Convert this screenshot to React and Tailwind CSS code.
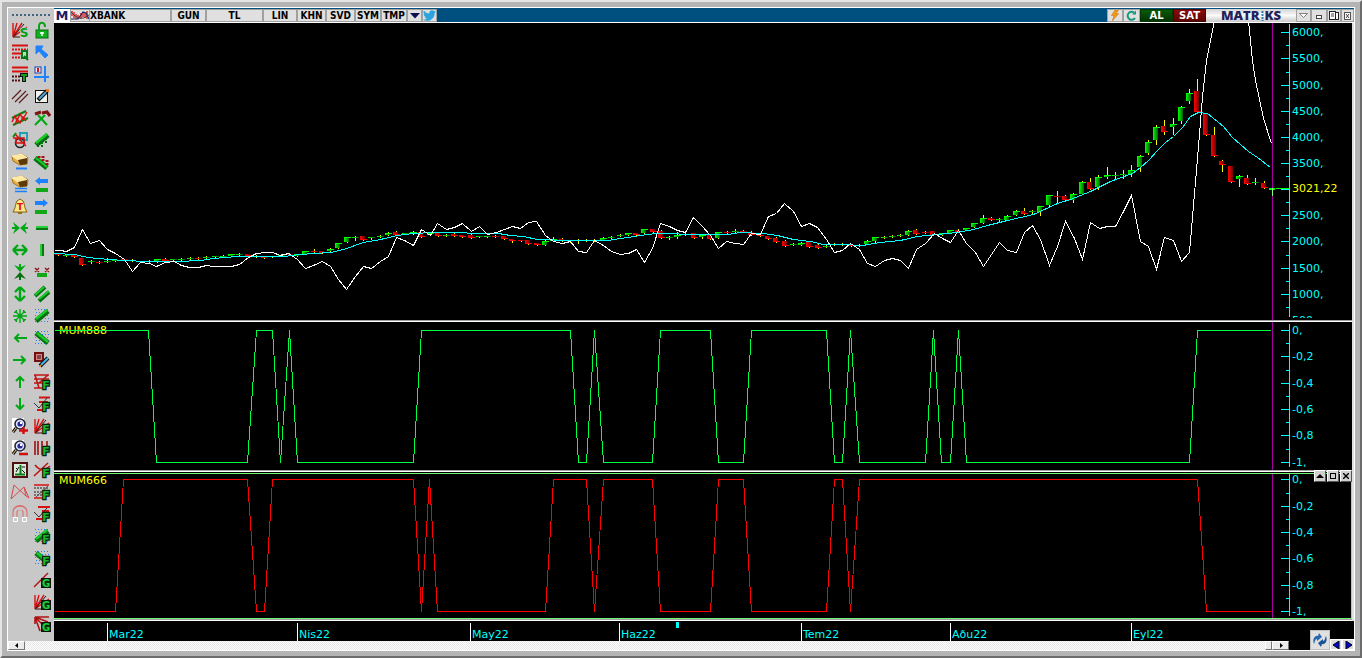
import clsx from "clsx";

const CHART_LEFT = 54;
const PLOT_WIDTH = 1219;

// [x, bodyTop, bodyBottom, high, low, up]
const CANDLES = [
  [58, 254, 255, 254, 255, 0], [66, 255, 256, 255, 256, 1], [74, 255, 257, 255, 257, 0], [82, 258, 265, 258, 265, 0],
  [91, 261, 262, 260, 263, 1], [99, 262, 263, 261, 263, 0], [107, 261, 262, 258, 262, 1], [115, 260, 261, 260, 261, 1],
  [124, 259, 260, 259, 260, 0], [132, 260, 261, 259, 261, 1], [140, 261, 262, 261, 262, 0], [149, 261, 262, 260, 262, 1],
  [157, 259, 262, 259, 262, 1], [165, 259, 261, 258, 261, 0], [173, 259, 260, 259, 260, 1], [181, 259, 260, 258, 260, 1],
  [190, 258, 259, 257, 259, 1], [198, 258, 259, 257, 259, 0], [206, 257, 258, 256, 258, 1], [215, 256, 257, 256, 257, 1],
  [223, 256, 257, 255, 257, 1], [231, 254, 256, 254, 256, 1], [239, 254, 255, 253, 255, 1], [248, 254, 256, 254, 256, 0],
  [256, 256, 257, 255, 257, 1], [264, 257, 258, 257, 258, 0], [272, 256, 257, 256, 257, 1], [281, 255, 256, 254, 256, 1],
  [289, 254, 255, 253, 255, 0], [297, 254, 256, 254, 256, 1], [305, 251, 254, 251, 254, 1], [314, 251, 252, 249, 252, 0],
  [322, 251, 253, 251, 253, 0], [330, 249, 251, 248, 251, 1], [338, 243, 248, 243, 248, 1], [347, 237, 242, 237, 242, 1],
  [355, 237, 238, 236, 240, 1], [363, 236, 240, 236, 240, 0], [371, 237, 238, 237, 239, 1], [380, 236, 237, 235, 237, 1],
  [388, 233, 235, 232, 235, 1], [396, 232, 235, 231, 235, 0], [405, 233, 234, 233, 234, 1], [413, 232, 234, 231, 234, 1],
  [421, 232, 237, 232, 237, 0], [430, 233, 235, 233, 235, 1], [438, 233, 236, 233, 236, 0], [446, 235, 236, 234, 236, 1],
  [454, 234, 236, 233, 236, 0], [462, 235, 237, 235, 237, 0], [471, 235, 238, 234, 238, 0], [479, 236, 237, 236, 237, 1],
  [487, 236, 237, 236, 237, 1], [495, 236, 237, 235, 237, 0], [504, 236, 239, 236, 239, 0], [512, 239, 241, 239, 242, 0],
  [521, 240, 241, 240, 241, 0], [528, 240, 244, 240, 244, 0], [537, 243, 245, 243, 245, 0], [545, 241, 245, 240, 245, 1],
  [553, 239, 241, 237, 241, 1], [562, 239, 241, 238, 241, 0], [570, 241, 242, 241, 242, 0], [578, 240, 241, 239, 243, 1],
  [586, 240, 241, 239, 241, 1], [594, 240, 241, 239, 241, 1], [603, 238, 240, 237, 240, 1], [611, 237, 238, 236, 238, 1],
  [620, 235, 236, 234, 236, 1], [628, 233, 235, 233, 235, 1], [636, 233, 235, 233, 235, 0], [644, 229, 233, 229, 233, 1],
  [653, 229, 232, 229, 232, 0], [661, 231, 238, 230, 238, 0], [669, 237, 238, 236, 239, 1], [677, 235, 237, 232, 238, 1],
  [685, 234, 235, 231, 235, 1], [694, 233, 238, 233, 238, 0], [702, 235, 237, 234, 238, 1], [710, 235, 239, 235, 239, 0],
  [718, 232, 238, 232, 238, 1], [727, 232, 233, 231, 234, 0], [735, 231, 232, 229, 232, 1], [743, 231, 232, 230, 232, 0],
  [751, 232, 235, 231, 235, 0], [760, 234, 236, 234, 236, 0], [768, 236, 239, 236, 239, 0], [776, 238, 242, 237, 242, 0],
  [785, 241, 246, 240, 246, 0], [793, 244, 245, 243, 245, 1], [801, 243, 245, 242, 245, 1], [809, 242, 247, 242, 247, 0],
  [818, 245, 248, 244, 248, 0], [826, 246, 247, 245, 247, 1], [834, 244, 245, 243, 245, 1], [842, 244, 245, 243, 245, 1],
  [851, 244, 246, 244, 246, 0], [859, 245, 246, 244, 246, 1], [867, 241, 244, 240, 244, 1], [875, 237, 241, 237, 242, 1],
  [884, 237, 238, 236, 238, 1], [892, 236, 237, 235, 237, 1], [900, 235, 236, 234, 236, 1], [908, 231, 235, 230, 235, 1],
  [916, 230, 234, 229, 234, 0], [925, 232, 233, 231, 233, 0], [933, 231, 235, 231, 235, 0], [942, 233, 235, 233, 235, 1],
  [950, 230, 233, 230, 233, 1], [958, 230, 232, 229, 232, 0], [966, 228, 230, 228, 230, 1], [974, 223, 227, 223, 227, 1],
  [983, 218, 223, 215, 223, 1], [991, 218, 220, 217, 220, 0], [999, 219, 220, 218, 221, 1], [1007, 216, 220, 215, 220, 1],
  [1016, 211, 215, 210, 215, 1], [1024, 211, 214, 208, 214, 0], [1032, 211, 212, 210, 213, 1], [1040, 206, 212, 206, 215, 1],
  [1049, 195, 205, 195, 206, 1], [1057, 196, 197, 191, 202, 0], [1065, 196, 200, 195, 200, 0], [1073, 194, 200, 193, 202, 1],
  [1082, 182, 194, 181, 194, 1], [1090, 182, 189, 178, 189, 0], [1098, 177, 187, 175, 189, 1], [1107, 175, 177, 167, 178, 1],
  [1115, 175, 176, 172, 179, 1], [1123, 174, 175, 170, 178, 1], [1131, 170, 174, 165, 176, 1], [1140, 156, 167, 155, 171, 1],
  [1148, 142, 153, 140, 154, 1], [1156, 127, 140, 125, 144, 1], [1164, 126, 132, 120, 134, 0], [1173, 124, 127, 118, 134, 1],
  [1181, 107, 121, 106, 123, 1], [1189, 93, 101, 89, 103, 1], [1197, 91, 112, 79, 112, 0], [1206, 114, 135, 114, 135, 0],
  [1214, 135, 156, 127, 156, 0], [1222, 161, 165, 160, 171, 0], [1231, 166, 182, 166, 182, 0], [1239, 176, 179, 175, 186, 1],
  [1247, 178, 184, 175, 184, 0], [1255, 182, 183, 178, 184, 1], [1264, 183, 188, 181, 188, 0],
];

const WHITE_LINE =
  "54,250 60,250 66,251 74,247 82,229 90,243 99,240 107,249 115,253 124,259 132,271 140,262 149,263 156,266 165,262 174,261 181,265 189,267 198,267 206,265 213,266 231,266 239,264 248,257 256,253 265,252 272,252 280,255 288,253 297,259 305,268 313,265 322,261 330,266 338,279 346,289 355,276 363,266 371,268 380,261 388,256 396,237 404,240 413,245 421,229 430,235 437,223 446,229 454,227 462,223 471,231 479,226 487,234 496,232 504,229 512,226 520,228 528,222 536,221 545,235 553,241 562,243 570,241 578,251 586,252 594,240 603,245 611,251 620,254 628,253 636,249 644,262 652,248 660,223 669,226 677,230 685,232 693,217 702,226 710,235 718,248 726,241 735,243 743,244 751,233 760,234 768,216 776,213 784,203 793,211 801,226 809,223 817,227 826,239 834,252 842,250 850,243 859,249 867,263 875,266 884,260 892,258 900,260 908,268 916,249 925,243 934,233 942,238 950,242 958,230 966,243 975,252 983,266 999,242 1007,250 1016,252 1024,232 1032,225 1040,239 1049,265 1057,246 1065,221 1074,238 1082,259 1090,222 1099,228 1107,226 1115,226 1123,211 1131,195 1140,241 1148,246 1156,269 1164,237 1173,240 1181,261 1189,252 1198,146 1202,96 1206,60 1214,20";

const WHITE_LINE_END = "1248,20 1252,60 1255,80 1263,118 1271,143";

const AVERAGE_LINE =
  "54,253 75,254 82,256 96,258 110,259 123,260 147,261 177,261 200,260 213,258 237,256 283,256 300,254 313,253 330,252 343,249 363,242 380,239 397,235 413,233 433,232 462,232 470,233 498,233 510,235 523,236 537,239 570,240 607,240 627,237 647,234 657,233 700,234 727,234 740,232 763,233 777,235 793,239 810,241 823,244 843,244 862,245 880,242 900,240 917,236 937,234 957,232 973,229 987,225 1007,220 1033,214 1057,203 1070,199 1090,191 1110,181 1132,173 1140,167 1148,160 1157,150 1165,142 1173,136 1182,127 1190,116 1198,112 1207,113 1223,126 1232,137 1240,144 1248,151 1257,157 1270,167";

const MUM888_LINE =
  "54,330 148,330 156,462 247,462 256,330 272,330 280,462 289,330 297,462 413,462 421,330 570,330 578,462 586,462 594,330 603,462 652,462 660,330 710,330 718,462 743,462 751,330 826,330 834,462 842,462 850,330 859,462 925,462 933,330 941,462 950,462 958,330 966,462 1189,462 1197,330 1270,330";

const MUM666_LINE =
  "54,611 115,611 123,479 247,479 256,611 264,611 272,479 413,479 421,611 429,479 437,611 545,611 553,479 586,479 594,611 603,479 652,479 660,611 710,611 718,479 743,479 751,611 826,611 834,479 842,479 850,611 859,479 1197,479 1206,611 1270,611";

const PRICE_TICKS = [
  [32, "6000,"], [58, "5500,"], [85, "5000,"], [111, "4500,"], [137, "4000,"], [163, "3500,"], [189, ""],
  [215, "2500,"], [241, "2000,"], [268, "1500,"], [294, "1000,"], [320, "500,"],
];

const MUM888_TICKS = [[330, "0,"], [356, "-0,2"], [383, "-0,4"], [409, "-0,6"], [435, "-0,8"], [462, "-1,"]];
const MUM666_TICKS = [[479, "0,"], [506, "-0,2"], [532, "-0,4"], [558, "-0,6"], [585, "-0,8"], [611, "-1,"]];

const MONTHS = [
  { x: 107, label: "Mar22" },
  { x: 297, label: "Nis22" },
  { x: 470, label: "May22" },
  { x: 619, label: "Haz22" },
  { x: 801, label: "Tem22" },
  { x: 950, label: "Aðu22" },
  { x: 1131, label: "Eyl22" },
];
const TIMELINE_END = 1289;

const RED = "#d81010";
const GREEN = "#00a814";
const BLUE = "#1e82ff";

const P = ({ d, c = GREEN, w = 1, f = "none", ...rest }) => (
  <path d={d} stroke={c} strokeWidth={w} fill={f} {...rest} />
);

const LetterF = () => (
  <text x="12" y="15" textAnchor="middle" fill="#18b828" stroke="#0a200a" strokeWidth="2.500" paintOrder="stroke" className="text-[11px] font-bold">
    F
  </text>
);

const LetterG = () => (
  <>
    <rect x="7.500" y="6.500" width="9" height="9" fill="#0c2c0c" stroke="#111" />
    <text x="12" y="15" textAnchor="middle" fill="#20d038" className="text-[10px] font-bold">G</text>
  </>
);

const fan = (
  <>
    <P d="M1 1V15L5 1M1 15L10 1M1 15L15 5" c={RED} w={1.4} />
    <P d="M1 15H8M2 14L12 2" c="#301010" />
  </>
);

const ingot = (
  <>
    <P d="M0 2L10 0L16 4L15 10L8 11L1 7Z" c="#a87410" f="#e9b04a" />
    <P d="M0 2L10 0L15 4L6 6Z" c="#fff0bd" f="#ffe8a0" />
    <P d="M6 6L8 11L15 10L15 4Z" c="none" f="#5c3a08" />
  </>
);

const magnifier = (
  <>
    <rect x="0" y="0" width="12" height="12" fill="#fff" />
    <circle cx="8" cy="6" r="5" fill="#dce8ff" stroke="#223" strokeWidth="1.6" />
    <circle cx="8" cy="6" r="2.6" fill="#28289c" />
    <rect x="8" y="4" width="2" height="2" fill="#fff" />
    <P d="M4 10L1 14" c="#111" w={3} />
    <P d="M4 10L1 14" c="#f0c060" />
  </>
);

const blueDots = <P d="M1 1.500H15M2 4.500H15M1 7.500H15M2 10.500H15M1 13.500H15" c={BLUE} strokeDasharray="1 2" />;
const barUp = (
  <>
    <P d="M2 13L14 3" c="#067010" w={5} />
    <P d="M2 11L13 2" c="#18cc28" w={2.5} />
  </>
);
const barDown = (
  <>
    <P d="M2 3L14 13" c="#067010" w={5} />
    <P d="M3 3L14 12" c="#18cc28" w={2.5} />
  </>
);

const LEFT_TOOLS = [
  ["Hız yelpazesi", <>{fan}<text x="12" y="15" textAnchor="middle" fill="#00a010" stroke="#c8c8c8" strokeWidth="1.500" paintOrder="stroke" className="text-[12px] font-bold">S</text></>],
  ["Çeyrek seviyeler", <><P d="M0 1.5H16M0 9.5H9" c={RED} w={2} /><P d="M0 5.5H16M0 13.5H9" c={RED} w={2} strokeDasharray="2 1" /><rect x="10" y="7" width="5" height="7" fill="#b4e8b4" stroke="#087818" strokeWidth="2" /><P d="M12 12L16 16" c="#087818" w={2} /></>],
  ["Üçte bir seviyeler", <><P d="M0 1.5H16M0 5.5H16" c={RED} w={2} /><P d="M0 10.5H8M0 14.5H8" c="#501010" w={2} strokeDasharray="2 1" /><P d="M8 9H16M12 9V16" c="#111" w={4} /><P d="M9 9H15M12 9V15" c="#10a020" w={2} /></>],
  ["Paralel çizgiler", <P d="M0 11L9 2M3 14L14 3M7 15L16 6" c="#5a2020" w={1.2} />],
  ["Kanal", <><P d="M0 8L14 1M1 15L16 8" c="#0a8010" w={2} /><P d="M0 12L3 6L5 11L8 4L11 9L15 2M3 15L5 9L8 13L11 7L14 11" c={RED} w={1.4} /></>],
  ["Şekiller", <><rect x="8" y="1" width="7" height="7" fill="none" stroke="#20a0b0" strokeWidth="2" /><circle cx="8" cy="11" r="4.5" fill="none" stroke="#222" strokeWidth="1.6" /><P d="M1 6H12V11H4V6M3 2L6 5L9 9L14 14" c={RED} w={1.6} /><P d="M1 5L4 1" c="#0a9010" w={2} /></>],
  ["Altın TL", <>{ingot}<P d="M4 14.5H15" c={BLUE} w={2} /></>],
  ["Altın USD", <>{ingot}<P d="M3 12.5H15M3 15.5H15" c={BLUE} w={1.6} /></>],
  ["Alarm", <><P d="M2 12C4 9 3 6 5 3L8 1L11 3C13 6 12 9 14 12L15 14H1Z" c="#806010" f="#ffe88a" /><text x="8" y="12" textAnchor="middle" fill="#e01010" className="text-[9px] font-bold">T</text><rect x="6" y="14" width="4" height="2" fill="#907020" /></>],
  ["Yatay daralt", <><path d="M1 2L8 8L1 14L3 9H0V7H3ZM15 2L8 8L15 14L13 9H16V7H13Z" fill={GREEN} /></>],
  ["Yatay genişlet", <P d="M1 8L6 3M1 8L6 13M15 8L10 3M15 8L10 13M1 8H15" w={2.4} />],
  ["Dikey daralt", <><path d="M2 1L8 8L14 1L9 3V0H7V3Z" fill={GREEN} /><path d="M2 15L8 8L14 15L9 13V16H7V13Z" fill="#087010" /></>],
  ["Dikey genişlet", <P d="M8 1L3 6M8 1L13 6M8 15L3 10M8 15L13 10M8 1V15" w={2.4} />],
  ["Sığdır", <><P d="M8 1V15M1 8H15M3 3L13 13M13 3L3 13" w={1.4} /><P d="M4.500 2V4.500H2M11.500 2V4.500H14M4.500 14V11.500H2M11.500 14V11.500H14" w={1.2} /><circle cx="8" cy="8" r="2" fill={GREEN} /></>],
  ["Sola kaydır", <P d="M15 8H3M7 4L3 8L7 12" w={2} />],
  ["Sağa kaydır", <P d="M1 8H13M9 4L13 8L9 12" w={2} />],
  ["Yukarı kaydır", <P d="M8 14V3M4 7L8 3L12 7" w={2} />],
  ["Aşağı kaydır", <P d="M8 2V13M4 9L8 13L12 9" w={2} />],
  ["Yakınlaştır", <>{magnifier}<P d="M7 12.5H16M11.5 9V16" c="#d01010" w={2.5} /></>],
  ["Uzaklaştır", <>{magnifier}<P d="M7 14H16" c="#d01010" w={2.5} /></>],
  ["Eksenler", <><rect x="1" y="1" width="14" height="14" fill="#d8ecd8" stroke="#501010" strokeWidth="2" /><P d="M8.5 3V12M3 12.5H13" c="#087818" w={2} /><P d="M4 6L6 8M7 5L4 10M10 8L13 11M10 5H13" c="#111" /></>],
  ["Kelebek formasyonu", <P d="M-1 15L2 1L14 12L12 3ZM12 3L17 14L14 12" c="#d84848" />],
  ["Mıknatıs", <><P d="M3 11V6C3 0 13 0 13 6V11" c="#dd6868" w={5} /><P d="M3 11V6C3 1 13 1 13 6V11" c="#c8c8c8" w={3} /><P d="M1.5 11.5H5.5V15.5H1.5ZM10.5 11.5H14.5V15.5H10.5Z" c="#fff" f="#ccc" /></>],
];

const RIGHT_TOOLS = [
  ["Kilit", <><rect x="2" y="8" width="12" height="8" fill="#10b020" stroke="#067010" /><P d="M5 8V4C5 -0.500 11 -0.500 11 5" w={2} c="#0ba018" /><P d="M8 10V14M6 11H10" c="#fff" w={1.4} /></>],
  ["Ok", <P d="M2 2H9L7 5L14 11L11 14L5 7L2 10Z" c={BLUE} f={BLUE} />],
  ["Artı imleç", <><P d="M0 11H15M11 0V16" c={BLUE} w={2} /><rect x="1" y="1" width="6" height="6" fill="#f4e8ff" stroke="#1844a0" /><P d="M4 2V6" c={RED} w={2} /></>],
  ["Not düzenle", <><rect x="1.5" y="2.5" width="12" height="12" fill="#f2f2ea" stroke="#111" /><P d="M4 12L13 3" c="#111" w={4} /><P d="M5 11L12 4" c="#46a4dd" w={2} /><rect x="12" y="1" width="3" height="3" fill="#e87828" /></>],
  ["Ayarlar", <><P d="M1 15L11 5M4 5L13 15" w={2} /><P d="M1 4L7 2M8 3L13 2L16 6" c="#7c1414" w={3} /></>],
  ["Yükselen trend", <>{barUp}<P d="M4 15V12M8 15V9M12 11V6" c="#067010" w={2} strokeDasharray="2 1" /></>],
  ["Düşen trend", <><P d="M1 4L13 14" c="#067010" w={5} /><P d="M2 4L13 13" c="#18cc28" w={2} /><P d="M5 4V1M9 7V2M13 11V6" c="#a01414" w={3} strokeDasharray="2 1" /></>],
  ["Sol ışın", <><path d="M1 5L6 1V3H14V7H6V9Z" fill={BLUE} /><rect x="2" y="12" width="12" height="4" fill="#10a818" /></>],
  ["Sağ ışın", <><path d="M14 5L9 1V3H1V7H9V9Z" fill={BLUE} /><rect x="1" y="12" width="12" height="4" fill="#10a818" /></>],
  ["Yatay çizgi", <><rect x="2" y="6" width="12" height="4" fill="#087810" /><rect x="2" y="6" width="12" height="2" fill="#28d038" /></>],
  ["Dikey çizgi", <><rect x="6" y="2" width="4" height="12" fill="#087810" /><rect x="6" y="2" width="2" height="12" fill="#28d038" /></>],
  ["Doğru parçası", <><rect x="3" y="9" width="10" height="4" fill="#10a818" /><P d="M1 4L5 8M5 4L1 8M11 4L15 8M15 4L11 8" c="#901414" w={1.4} /></>],
  ["Paralel kanal", <><P d="M1 10L11 1M5 15L15 6" c="#067010" w={4} /><P d="M1 9L10 1M5 13L15 5" c="#18cc28" w={2} /></>],
  ["Yukarı bant", <>{blueDots}{barUp}</>],
  ["Aşağı bant", <>{blueDots}{barDown}</>],
  ["Silgi", <><rect x="1" y="1" width="8" height="8" fill="#e08080" stroke="#701010" strokeWidth="2" /><P d="M3 4H7M3 6H7" c="#111" /><P d="M6 14L14 6" c="#111" w={4} /><P d="M7 13L14 6" c="#48b4e8" w={2} /><rect x="5" y="13" width="2" height="2" fill="#e88828" /></>],
  ["Fibonacci dikdörtgen", <><P d="M0 1H15M0 5H15M0 9H9M0 14H9M1 1L5 14M5 9L14 1" c="#c01414" w={1.6} /><LetterF /></>],
  ["Fibonacci geri çekilme", <><P d="M5 1.5H16M5 6H14M3 14H9" c={RED} w={2} /><P d="M0 7L5 12L13 2" c="#333" /><LetterF /></>],
  ["Fibonacci yelpaze", <>{fan}<LetterF /></>],
  ["Fibonacci zaman", <><P d="M1 1V15M4 1V15M8 1V15M13 1V6" c="#a01010" w={1.6} /><LetterF /></>],
  ["Fibonacci yay", <><P d="M0 14L14 1M1 3C6 9 10 9 16 4" c="#c01414" w={1.6} /><LetterF /></>],
  ["Fibonacci kanal", <><P d="M0 1H15M0 14H8" c={RED} w={1.6} /><P d="M0 4H15M0 8H8M0 11H8" c="#222" strokeDasharray="2 1" /><P d="M2 13L14 2" c="#555" /><LetterF /></>],
  ["Fibonacci genişleme", <><P d="M4 1H16M8 5H15M2 13H9" c={RED} w={2} /><P d="M0 6L5 11L13 2" c="#333" /><LetterF /></>],
  ["Fibonacci yukarı bant", <>{blueDots}{barUp}<LetterF /></>],
  ["Fibonacci aşağı bant", <>{blueDots}{barDown}<LetterF /></>],
  ["Gann çizgisi", <><P d="M0 15L14 1" c="#b01414" w={1.4} /><LetterG /></>],
  ["Gann yelpaze", <>{fan}<LetterG /></>],
  ["Gann ızgara", <><P d="M1 1H15M1 1L14 6M1 1L12 12M1 1L6 15M1 1V8" c="#b01414" w={1.6} /><LetterG /></>],
];

const Tool = ({ label, children }) => (
  <button type="button" aria-label={label} className="flex h-[22px] w-4 items-center justify-center">
    <svg viewBox="0 0 16 16" className="size-4 overflow-visible">
      {children}
    </svg>
  </button>
);

function Toolbar() {
  return (
    <aside className="row-span-2 overflow-hidden bg-[#c8c8c8] px-1 pt-[6px]">
      <div className="mb-[3px] h-[2px] bg-[repeating-linear-gradient(90deg,#42647c_0_2px,transparent_2px_4px)]" />
      <div className="flex justify-between">
        <div className="flex flex-col">
          {LEFT_TOOLS.map(([label, icon]) => (
            <Tool key={label} label={label}>{icon}</Tool>
          ))}
        </div>
        <div className="flex flex-col">
          {RIGHT_TOOLS.map(([label, icon]) => (
            <Tool key={label} label={label}>{icon}</Tool>
          ))}
        </div>
      </div>
    </aside>
  );
}

const BarButton = ({ className, children, ...rest }) => (
  <button
    type="button"
    className={clsx(
      "flex h-[13px] shrink-0 items-center justify-center overflow-hidden border border-[#a0a0a0] bg-[#e0e0e0] font-['DejaVu_Sans_Condensed','DejaVu_Sans',sans-serif] text-[10px] leading-[11px] font-bold text-black",
      className
    )}
    {...rest}
  >
    {children}
  </button>
);

function TitleBar() {
  return (
    <header className="flex h-[15px] border-t border-b border-t-[#00507f] border-b-white bg-[#00507f]">
      <span className="flex w-4 shrink-0 items-center justify-center bg-white text-[13px] leading-[13px] font-bold text-[#1c1c64]">M</span>
      <BarButton aria-label="Grafik tipi" className="w-5">
        <svg viewBox="0 0 18 11" className="h-[11px] w-[18px]">
          <P d="M1 1V6M3 2V8M5 4V9M7 5V9M10 3V9M12 2V7M14 3V8M16 1V9" c="#e02020" w={1.4} />
          <P d="M0 9H7L12 2L15 3L18 9" c="#222266" w={1.2} />
          <P d="M0 2L4 6L8 8L13 8L18 5" c="#444" />
        </svg>
      </BarButton>
      <BarButton className="w-[81px] justify-start! border-l-0">XBANK</BarButton>
      <BarButton className="w-[35px]">GUN</BarButton>
      <BarButton className="w-[57px]">TL</BarButton>
      <BarButton className="w-[34px]">LIN</BarButton>
      <BarButton className="w-[29px]">KHN</BarButton>
      <BarButton className="w-[29px]">SVD</BarButton>
      <BarButton className="w-[26px]">SYM</BarButton>
      <BarButton className="w-[26px]">TMP</BarButton>
      <BarButton aria-label="Şablonlar" className="w-[15px]">
        <svg viewBox="0 0 10 6" className="h-[6px] w-[10px]"><path d="M0 0H10L5 5.5Z" fill="#101050" /></svg>
      </BarButton>
      <BarButton aria-label="Twitter" className="w-[15px]">
        <svg viewBox="0 0 24 24" className="size-[13px]">
          <path fill="#2aa3de" d="M24 4.6a10 10 0 0 1-2.8.8 5 5 0 0 0 2.1-2.7 10 10 0 0 1-3.1 1.2 4.9 4.9 0 0 0-8.4 4.5A14 14 0 0 1 1.7 3.1a4.9 4.9 0 0 0 1.5 6.6 5 5 0 0 1-2.2-.6 4.9 4.9 0 0 0 3.9 4.9 5 5 0 0 1-2.2.1 4.9 4.9 0 0 0 4.6 3.4A10 10 0 0 1 0 19.5 14 14 0 0 0 7.5 21.7C16.6 21.7 21.5 14.2 21.5 7.7v-.6A10 10 0 0 0 24 4.6Z" />
        </svg>
      </BarButton>
      <div className="flex-1" />
      <BarButton aria-label="Hızlı emir" className="w-4">
        <svg viewBox="0 0 10 12" className="h-[11px] w-[10px]"><path d="M5 0H9L6 4H9L2 12L4 6H1Z" fill="#f59a0c" stroke="#c06808" strokeWidth="0.5" /></svg>
      </BarButton>
      <BarButton aria-label="Yenile" className="w-[17px]">
        <svg viewBox="0 0 11 11" className="size-[11px]">
          <P d="M9 8A4 4 0 1 1 8 2.5" c="#18987c" w={2} />
          <path d="M6 4.5H10V0.5Z" fill="#18987c" />
        </svg>
      </BarButton>
      <button type="button" className="h-[13px] w-[33px] border border-[#063806] bg-linear-to-b from-[#0a5a0a] to-[#033403] text-[10px] leading-[11px] font-bold text-white">AL</button>
      <button type="button" className="h-[13px] w-[33px] border border-[#4a0404] bg-linear-to-b from-[#8c0c0c] to-[#5a0404] text-[10px] leading-[11px] font-bold text-white">SAT</button>
      <div className="flex w-[90px] shrink-0 items-center justify-center bg-linear-to-b from-[#d4d4d4] via-[#fafafa] to-[#c8c8c8] font-['Open_Sans',sans-serif] text-[13px] leading-[13px] font-extrabold text-[#22225c]">
        MATR
        <svg viewBox="0 0 3 10" className="mx-px h-[10px] w-[3px]"><P d="M1.5 0V10" c="#2c7cb4" w={2} strokeDasharray="2 1" /></svg>
        KS
      </div>
      <BarButton aria-label="Menü" className="w-[15px]">
        <svg viewBox="0 0 9 5" className="h-[5px] w-[9px]"><path d="M0.5 0.5H8.5L4.5 4.5Z" fill="#fff" stroke="#666" strokeWidth="0.8" /></svg>
      </BarButton>
      <BarButton aria-label="Küçült" className="w-4">
        <svg viewBox="0 0 6 4" className="mt-[3px] h-1 w-[6px]"><rect x="0.5" y="0.5" width="5" height="3" fill="#fff" stroke="#444" /></svg>
      </BarButton>
      <BarButton aria-label="Önceki boyut" className="w-[14px]">
        <svg viewBox="0 0 10 9" className="h-[9px] w-[10px]"><rect x="4.5" y="1.5" width="5" height="7" fill="#fff" stroke="#222" /><rect x="0.5" y="0.5" width="6" height="8" fill="#fff" stroke="#222" /><P d="M2 3H5M2 5H5" c="#444" /></svg>
      </BarButton>
      <BarButton aria-label="Kapat" className="w-[13px]">
        <svg viewBox="0 0 7 8" className="h-2 w-[7px]"><rect x="0.5" y="0.5" width="6" height="7" fill="#fff" stroke="#555" /><P d="M2 2L5 6M5 2L2 6" c="#444" /></svg>
      </BarButton>
    </header>
  );
}

function Axis({ top, height, from, to, ticks, last }) {
  return (
    <svg viewBox={`1273 ${top} 79 ${height}`} className="w-[79px] shrink-0" shapeRendering="crispEdges">
      <rect x="1289" y={from} width="1" height={to - from} fill="#00ffff" />
      {ticks.map(([y, label], i) => (
        <g key={y} fill="#00ffff">
          {y < to && <rect x="1281" y={y} width="8" height="1" />}
          {label && <text x="1292" y={y + 4} className="text-[11px]">{label}</text>}
          {i > 0 && <rect x="1286" y={Math.round((y + ticks[i - 1][0]) / 2)} width="3" height="1" />}
        </g>
      ))}
      {/* nothing is shown below the end of the scale */}
      <rect x="1273" y={to + 1} width="78" height="10" fill="#000" />
      {last && (
        <>
          <rect x="1276" y={last.y} width="13" height="1" fill="#00ff00" />
          <rect x="1273" y={last.y} width="2" height="2" fill="#00ff00" />
          <text x="1292" y={last.y + 4} fill="#ffff00" className="text-[11px]">{last.label}</text>
        </>
      )}
    </svg>
  );
}

function Panel({ label, labelClassName, top, height, className, axis, children, controls }) {
  return (
    <section className={clsx("relative flex bg-black", className)}>
      {label && (
        <h2 className={clsx("absolute top-0 left-[5px] text-[11px] leading-[13px] text-[#ffff00]", labelClassName)}>
          {label}
        </h2>
      )}
      <svg
        viewBox={`${CHART_LEFT} ${top} ${PLOT_WIDTH} ${height}`}
        preserveAspectRatio="none"
        className="relative h-full w-0 flex-1"
        shapeRendering="crispEdges"
      >
        <rect x="1272" y={top} width="1" height={height} fill="#a000a0" />
        {children}
      </svg>
      <Axis top={top} height={height} {...axis} />
      {controls}
    </section>
  );
}

const Line = ({ points, color }) => (
  <polyline points={points} fill="none" stroke={color} strokeWidth="1" transform="translate(0.5 0.5)" />
);

function Candle({ candle }) {
  const [x, top, bottom, high, low, up] = candle;
  const thin = bottom - top < 2;
  return (
    <g>
      <rect x={x} y={high} width="1" height={low - high + 1} fill="#ffff00" />
      <rect x={x - 3} y={top} width={thin ? 7 : 5} height={Math.max(bottom - top, 1)} fill={up ? "url(#up)" : "url(#down)"} />
      {!thin && up === 1 && <rect x={x - 3} y={top} width="7" height="1" fill="#00ff00" />}
      {!thin && up === 0 && <rect x={x - 2} y={bottom - 1} width="6" height="1" fill="#ff0000" />}
    </g>
  );
}

const Divider = () => <div className="h-[2px] border-t border-b border-t-[#a0a0a0] border-b-white" />;

function PanelControls() {
  const base = "flex size-3 items-center justify-center border border-t-white border-l-white border-r-[#555] border-b-[#555] bg-[#d0d0d0]";
  return (
    <div className="absolute -top-[4px] right-0 flex gap-px">
      <button type="button" aria-label="Yukarı taşı" className={base}>
        <svg viewBox="0 0 8 4" className="h-1 w-2"><path d="M4 0L8 4H0Z" /></svg>
      </button>
      <button type="button" aria-label="Büyüt" className={base}>
        <svg viewBox="0 0 6 6" className="size-[6px]"><rect x="0.5" y="0.5" width="5" height="5" fill="none" stroke="#000" /></svg>
      </button>
      <button type="button" aria-label="Paneli kapat" className={base}>
        <svg viewBox="0 0 6 6" className="size-[6px]"><P d="M0 0L6 6M6 0L0 6" c="#000" w={1.4} /></svg>
      </button>
    </div>
  );
}

function Charts() {
  return (
    <div className="border-r-2 border-[#e0e0e0]">
      <Panel
        top={23}
        height={297}
        className="h-[297px]"
        axis={{ from: 24, to: 317, ticks: PRICE_TICKS, last: { y: 188, label: "3021,22" } }}
      >
        <defs>
          <linearGradient id="up">
            <stop offset="0" stopColor="#00ff00" />
            <stop offset="1" stopColor="#006000" />
          </linearGradient>
          <linearGradient id="down">
            <stop offset="0" stopColor="#ff0000" />
            <stop offset="1" stopColor="#700000" />
          </linearGradient>
        </defs>
        {CANDLES.map((candle) => (
          <Candle key={candle[0]} candle={candle} />
        ))}
        <Line points={AVERAGE_LINE} color="#00ffff" />
        <Line points={WHITE_LINE} color="#ffffff" />
        <Line points={WHITE_LINE_END} color="#ffffff" />
        <rect x="1269" y="188" width="4" height="2" fill="#00ff00" />
        <rect x="1272" y="188" width="1" height="8" fill="#80ff80" />
      </Panel>
      <Divider />
      <Panel
        label="MUM888"
        labelClassName="pt-[2px]"
        top={322}
        height={148}
        className="h-[148px]"
        axis={{ from: 324, to: 467, ticks: MUM888_TICKS }}
      >
        <Line points={MUM888_LINE} color="#00ff40" />
      </Panel>
      <Divider />
      <div className="bg-black pt-px">
        <Panel
          label="MUM666"
          top={474}
          height={144}
          className="h-[146px] border-t border-b border-[#70f870] shadow-[inset_-1px_0_#70f870]"
          axis={{ from: 474, to: 616, ticks: MUM666_TICKS }}
          controls={<PanelControls />}
        >
          <Line points={MUM666_LINE} color="#ff0000" />
        </Panel>
      </div>
      <Divider />
    </div>
  );
}

function Timeline() {
  const span = TIMELINE_END - CHART_LEFT;
  return (
    <div className="relative flex overflow-hidden bg-black pt-[2px]">
      <div className="shrink-0" style={{ width: `${((MONTHS[0].x - CHART_LEFT) / span) * 100}%` }} />
      {MONTHS.map(({ x, label }, i) => {
        const next = MONTHS[i + 1]?.x ?? TIMELINE_END;
        return (
          <span
            key={label}
            className="shrink-0 border-l border-white pt-[5px] pl-px text-[11px] leading-[13px] text-[#00ffff]"
            style={{ width: `${((next - x) / span) * 100}%` }}
          >
            {label}
          </span>
        );
      })}
      <i className="absolute top-px h-[6px] w-[3px] bg-[#00ffff]" style={{ left: `${((676 - CHART_LEFT) / span) * 100}%` }} />
    </div>
  );
}

const ScrollArrow = ({ label, d }) => (
  <button
    type="button"
    aria-label={label}
    className="flex h-[9px] w-[17px] items-center justify-center border border-t-white border-l-white border-r-[#777] border-b-[#777] bg-[#ececec]"
  >
    <svg viewBox="0 0 4 5" className="h-[5px] w-1"><path d={d} /></svg>
  </button>
);

function Scrollbar() {
  return (
    <div className="col-span-2 flex bg-[repeating-conic-gradient(#e6e6e6_0_25%,#fff_0_50%)] bg-[length:2px_2px]">
      <ScrollArrow label="Geri" d="M3 0V5L0 2.5Z" />
      <div className="flex-1" />
      <button type="button" aria-label="Kaydırma çubuğu" className="h-[9px] w-[7px] border border-t-white border-l-white border-r-[#777] border-b-[#777] bg-[#ececec]" />
      <ScrollArrow label="İleri" d="M1 0V5L4 2.5Z" />
    </div>
  );
}

function Navigator() {
  const step = "flex h-[11px] w-3 items-center justify-center border border-white bg-[#dcdcdc]";
  return (
    <div className="col-start-3 row-span-2 row-start-2 flex items-end justify-end bg-black">
      <button type="button" aria-label="Veriyi yenile" className="flex size-5 items-center justify-center border border-[#c0c0c0] bg-[#e0e0e0]">
        <svg viewBox="0 0 16 16" className="size-4">
          <path d="M2 12C0 7 3 3 6 4L7 1L10 5L5 9V7C3 7 3 10 2 12Z" fill="#2868b0" />
          <path d="M14 4C16 9 13 13 10 12L9 15L6 11L11 7V9C13 9 13 6 14 4Z" fill="#1c5498" />
        </svg>
      </button>
      <button type="button" aria-label="Önceki" className={step}>
        <svg viewBox="0 0 7 8" className="h-2 w-[7px]"><path d="M6 0V8L0 4Z" fill="#0000e0" stroke="#000" /></svg>
      </button>
      <button type="button" aria-label="Sonraki" className={step}>
        <svg viewBox="0 0 7 8" className="h-2 w-[7px]"><path d="M1 0V8L7 4Z" fill="#0000e0" stroke="#000" /></svg>
      </button>
    </div>
  );
}

function App() {
  return (
    <main className="min-h-screen border-2 border-t-[#e4e4e4] border-r-[#6c6c6c] border-b-[#6c6c6c] border-l-[#e4e4e4] bg-[#b4b4b4] p-[5px] font-['DejaVu_Sans',sans-serif]">
      <div className="grid grid-cols-[46px_minmax(0,1fr)_65px] grid-rows-[auto_20px_9px] border border-white bg-[#c8c8c8]">
        <Toolbar />
        <div className="col-span-2 min-w-0">
          <TitleBar />
          <Charts />
        </div>
        <Timeline />
        <Navigator />
        <Scrollbar />
      </div>
    </main>
  );
}

export default App;
